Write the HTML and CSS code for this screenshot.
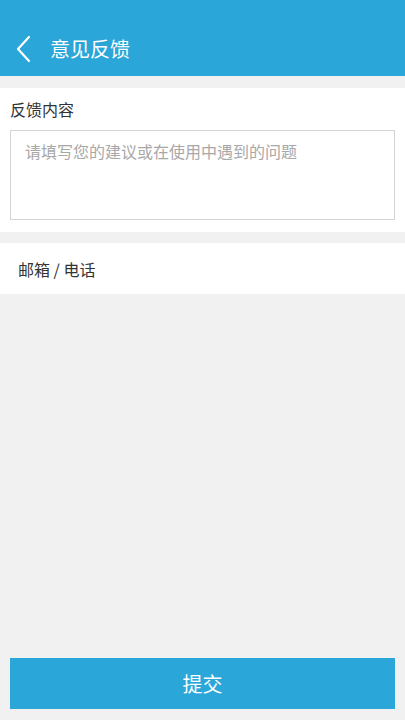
FILE: index.html
```html
<!DOCTYPE html>
<html lang="zh">
<head>
<meta charset="utf-8">
<link rel="stylesheet" href="styles.css">
</head>
<body>
<div class="page">
  <header class="topbar">
    <svg class="back" width="16" height="28" viewBox="0 0 16 28"><polyline points="13,2 2,14 13,26" fill="none" stroke="#fff" stroke-width="2.2" stroke-linecap="round" stroke-linejoin="round"/></svg>
    <h1 class="title">意见反馈</h1>
  </header>
  <section class="card feedback">
    <div class="label">反馈内容</div>
    <div class="textarea"><span class="placeholder">请填写您的建议或在使用中遇到的问题</span></div>
  </section>
  <section class="card contact">
    <div class="contact-label">邮箱 / 电话</div>
  </section>
  <div class="spacer"></div>
  <div class="footer">
    <button class="submit">提交</button>
  </div>
</div>
</body>
</html>
```
FILE: styles.css
```css
* { box-sizing: border-box; }
html, body { margin: 0; padding: 0; }
body {
  background: #f1f1f1;
  font-family: "Noto Sans CJK SC", "Noto Sans", sans-serif;
  color: #333;
}
.page {
  height: 720px;
  display: flex;
  flex-direction: column;
}
.topbar {
  height: 76px;
  background: #2aa6d8;
  display: flex;
  align-items: center;
  padding: 22px 0 0 16px;
}
.back { display: block; }
.title {
  margin: 0 0 0 18px;
  color: #fff;
  font-size: 20px;
  font-weight: 400;
  line-height: 28px;
}
.card { background: #fff; }
.feedback {
  margin-top: 12px;
  padding: 10px 10px 12px;
}
.label {
  font-size: 16px;
  line-height: 22px;
  color: #333;
}
.textarea {
  margin-top: 10px;
  height: 90px;
  border: 1px solid #d4d4d4;
  padding: 8px 14px;
}
.placeholder {
  font-size: 16px;
  line-height: 22px;
  color: #a8a8a8;
}
.contact {
  margin-top: 11px;
  height: 51px;
  display: flex;
  align-items: center;
  padding-left: 18px;
}
.contact-label {
  font-size: 16px;
  color: #333;
}
.spacer { flex: 1; }
.footer { padding: 0 10px 11px; }
.submit {
  width: 100%;
  height: 51px;
  border: none;
  background: #2aa6d8;
  color: #fff;
  font-family: inherit;
  font-size: 20px;
  display: block;
}
```
